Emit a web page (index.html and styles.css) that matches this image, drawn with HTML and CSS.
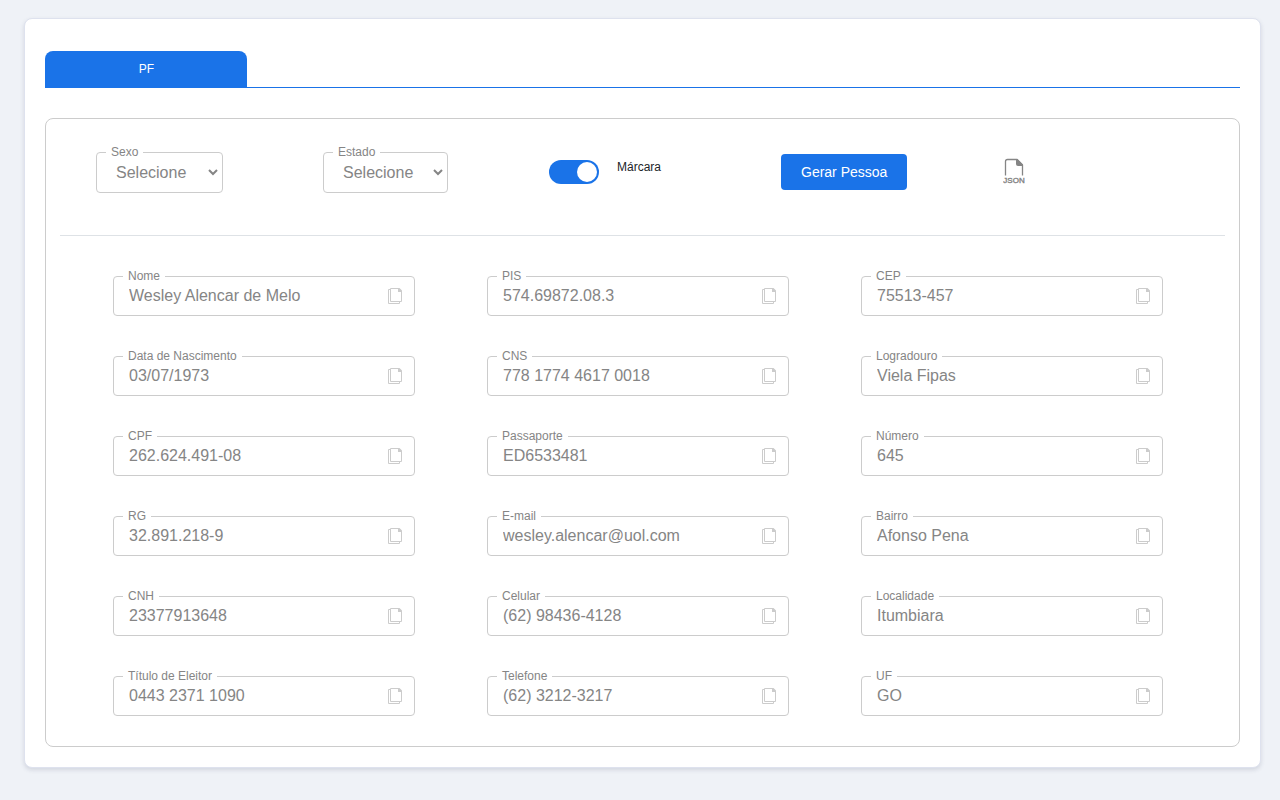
FILE: index.html
```html
<!DOCTYPE html>
<html lang="pt-BR">
<head>
<meta charset="utf-8">
<title>Gerador de Pessoas</title>
<link rel="stylesheet" href="styles.css">
<script src="fields.js" defer></script>
</head>
<body>
<svg class="sprite" width="0" height="0" aria-hidden="true">
  <symbol id="copy" viewBox="0 0 14 16">
    <path d="M2 1.500H.5v14h11V14M2.500.5H11l2.500 2.500v10.500h-11z" fill="none" stroke="currentColor"/>
    <path d="M10 0h1.500L14 2.500V4h-4z" fill="currentColor"/>
  </symbol>
</svg>
<main class="card">
  <nav class="tabs"><button class="tab" type="button">PF</button></nav>
  <section class="panel">
    <form class="toolbar">
      <div class="field select-sexo">
        <label class="field-label" for="sexo">Sexo</label>
        <select class="select" id="sexo"><option>Selecione</option></select>
      </div>
      <div class="field select-estado">
        <label class="field-label" for="estado">Estado</label>
        <select class="select" id="estado"><option>Selecione</option></select>
      </div>
      <div class="switch-group">
        <input class="switch" type="checkbox" id="mascara" checked>
        <label class="switch-label" for="mascara">Márcara</label>
      </div>
      <button class="generate" type="button">Gerar Pessoa</button>
      <button class="json" type="button" aria-label="JSON">
        <svg width="22" height="26" viewBox="0 0 22 26">
          <path d="M2.500 17.500V3.500q0-2 2-2H14l5.500 5.500v10.500" fill="none" stroke="currentColor" stroke-width="1.300"/>
          <path d="M13 1h1.500L20 6.500V8h-5q-2 0-2-2z" fill="currentColor"/>
          <text class="json-text" x="11" y="25" text-anchor="middle">JSON</text>
        </svg>
      </button>
    </form>
    <hr class="divider">
    <div class="grid" id="fields"></div>
  </section>
</main>
</body>
</html>
```
FILE: styles.css
```css
* { box-sizing: border-box; }
body {
  margin: 0;
  padding: 18px 19px 32px 24px;
  background: #eff2f7;
  color: #212529;
  font-family: "Liberation Sans", Arial, sans-serif;
}
.sprite { position: absolute; }
.card {
  padding: 32px 20px 20px;
  background: #fff;
  border: 1px solid #dee2ee;
  border-radius: 8px;
  box-shadow: 0 2px 4px rgba(60, 70, 100, 0.16);
}
.tabs { display: flex; border-bottom: 1px solid #1a73e8; }
.tab {
  width: 202px;
  height: 37px;
  margin: 0 0 -1px;
  padding: 0 0 2px 1px;
  border: 0;
  border-radius: 8px 8px 0 0;
  background: #1a73e8;
  color: #fff;
  font: 12px/16px "Liberation Sans", Arial, sans-serif;
}
.panel {
  margin-top: 30px;
  padding: 33px 14px 30px;
  border: 1px solid #ccc;
  border-radius: 8px;
}
.toolbar {
  display: grid;
  grid-template-columns: 227fr 226fr 232fr 222fr 222fr;
  align-items: start;
  justify-items: start;
  padding-left: 36px;
}
.field {
  position: relative;
  display: flex;
  align-items: center;
  height: 40px;
  border: 1px solid #ccc;
  border-radius: 4px;
}
.field-label {
  position: absolute;
  top: -8px;
  left: 9px;
  padding: 0 5px;
  background: #fff;
  color: #858585;
  font-size: 12px;
  line-height: 14px;
}
.select-sexo, .select-estado { height: 41px; padding-right: 1px; }
.select-sexo { width: 127px; }
.select-estado { width: 125px; }
.select {
  width: 100%;
  height: 100%;
  padding: 0 0 0 15px;
  border: 0;
  border-radius: 4px;
  background: transparent;
  color: #858585;
  font: 16px "Liberation Sans", Arial, sans-serif;
}
.switch-group { display: flex; gap: 18px; padding-top: 8px; }
.switch {
  appearance: none;
  width: 50px;
  height: 24px;
  margin: 0;
  padding: 2px;
  border-radius: 12px;
  background: #1a73e8;
}
.switch::before {
  content: "";
  display: block;
  width: 20px;
  height: 20px;
  border-radius: 50%;
  background: #fff;
}
.switch:checked::before { margin-left: auto; }
.switch-label { font-size: 12px; line-height: 14px; }
.generate {
  height: 36px;
  margin-top: 2px;
  padding: 0 20px;
  border: 0;
  border-radius: 4px;
  background: #1a73e8;
  color: #fff;
  font: 14px "Liberation Sans", Arial, sans-serif;
}
.json {
  display: flex;
  margin-top: 6px;
  padding: 0;
  border: 0;
  background: none;
  color: #858585;
}
.json-text {
  fill: currentColor;
  stroke: currentColor;
  stroke-width: 0.4px;
  font: 8px "Liberation Sans", Arial, sans-serif;
}
.divider { margin: 42px 0 40px; border: 0; border-top: 1px solid #dee2e6; }
.grid {
  display: grid;
  grid-template-columns: repeat(3, 1fr);
  gap: 40px 72px;
  padding: 0 62px 0 53px;
}
.input {
  flex: 1;
  min-width: 0;
  height: 100%;
  padding: 0 0 0 15px;
  border: 0;
  background: transparent;
  color: #858585;
  font: 16px "Liberation Sans", Arial, sans-serif;
}
.copy {
  display: flex;
  margin-right: 12px;
  padding: 0;
  border: 0;
  background: none;
  color: #ccc;
}
```
FILE: fields.js
```js
const fields = [
  ["Nome", "Wesley Alencar de Melo"], ["PIS", "574.69872.08.3"], ["CEP", "75513-457"],
  ["Data de Nascimento", "03/07/1973"], ["CNS", "778 1774 4617 0018"], ["Logradouro", "Viela Fipas"],
  ["CPF", "262.624.491-08"], ["Passaporte", "ED6533481"], ["Número", "645"],
  ["RG", "32.891.218-9"], ["E-mail", "wesley.alencar@uol.com"], ["Bairro", "Afonso Pena"],
  ["CNH", "23377913648"], ["Celular", "(62) 98436-4128"], ["Localidade", "Itumbiara"],
  ["Título de Eleitor", "0443 2371 1090"], ["Telefone", "(62) 3212-3217"], ["UF", "GO"]
];
document.getElementById("fields").innerHTML = fields.map(([label, value], i) => `
  <div class="field">
    <label class="field-label" for="f${i}">${label}</label>
    <input class="input" id="f${i}" type="text" value="${value}" readonly>
    <button class="copy" type="button" aria-label="Copiar ${label}"><svg width="14" height="16"><use href="#copy"/></svg></button>
  </div>`).join("");
```
